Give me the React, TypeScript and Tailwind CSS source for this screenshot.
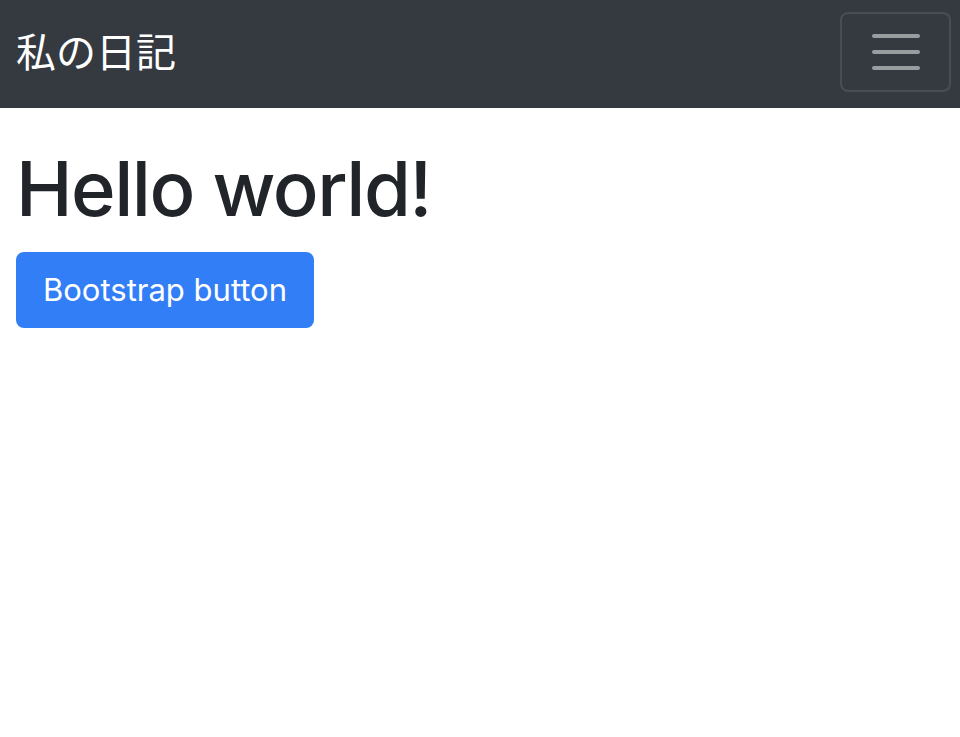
export default function App() {
  return (
    <div className="min-h-screen bg-white font-['Inter','Noto_Sans_CJK_JP',sans-serif] text-[#212529]">
      {/* ナビバー */}
      <nav className="flex h-[108px] items-start justify-between bg-[#343a40] pl-4 pr-[9px] pt-3">
        <a href="#" className="mt-[18px] font-['Noto_Sans_CJK_JP',sans-serif] text-[40px] leading-none text-white">
          私の日記
        </a>
        <button
          type="button"
          aria-label="Toggle navigation"
          className="flex h-[80px] w-[111px] flex-col items-center justify-center gap-3 rounded-lg border-2 border-white/10"
        >
          <span className="block h-1 w-12 rounded-full bg-white/50" />
          <span className="block h-1 w-12 rounded-full bg-white/50" />
          <span className="block h-1 w-12 rounded-full bg-white/50" />
        </button>
      </nav>

      <main className="px-4 pt-[42px]">
        <h1 className="text-[76px] font-medium leading-none tracking-[-0.02em]">Hello world!</h1>
        <button
          type="button"
          className="mt-[26px] h-[76px] w-[298px] rounded-lg bg-[#327ef6] text-[31px] text-white"
        >
          Bootstrap button
        </button>
      </main>
    </div>
  );
}
